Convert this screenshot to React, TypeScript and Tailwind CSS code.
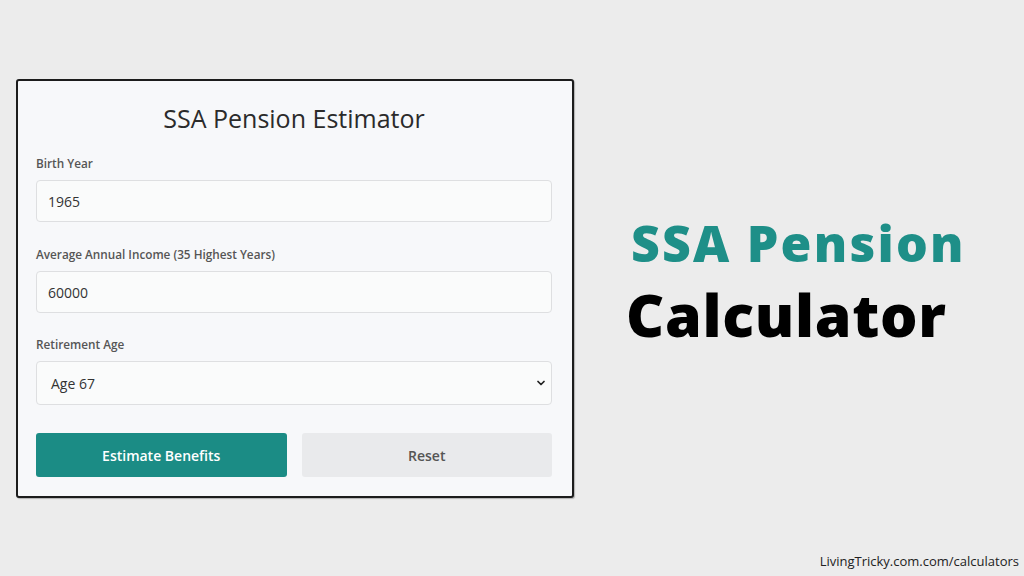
import { ChevronDown } from 'lucide-react'

function Field({ label, value, className }: { label: string; value: string; className?: string }) {
  return (
    <div className={className}>
      <label className="block text-[11.75px] leading-4 font-semibold text-[#555]">{label}</label>
      <div className="mt-[9px] h-[42px] flex items-center px-[11px] rounded-[4px] border border-[#dedfe1] bg-[#fafbfb] text-[14px] text-[#333]">
        {value}
      </div>
    </div>
  )
}

export default function App() {
  return (
    <div
      className="h-screen w-full bg-[#ececec] flex flex-col overflow-hidden"
      style={{ fontFamily: '"Open Sans", "Noto Sans", sans-serif' }}
    >
      <div className="flex items-start pt-[79px] pl-[16px]">
        <div className="w-[558px] border-2 border-[#1c1c1c] rounded-[3px] bg-[#f7f8fa] pt-[21px] pb-[19px] pl-[18px] pr-[20px] shadow-[1px_1px_1px_rgba(0,0,0,0.25)]">
          <h1 className="text-center text-[25px] leading-8 font-medium text-[#2b2b2b]">SSA Pension Estimator</h1>

          <Field className="mt-[21px]" label="Birth Year" value="1965" />
          <Field className="mt-[24px]" label="Average Annual Income (35 Highest Years)" value="60000" />

          <div className="mt-[23px]">
            <label className="block text-[11.75px] leading-4 font-semibold text-[#555]">Retirement Age</label>
            <div className="mt-[9px] h-[44px] flex items-center justify-between pl-[14px] pr-[4px] rounded-[4px] border border-[#dedfe1] bg-[#fafbfb] text-[14px] text-[#333]">
              <span>Age 67</span>
              <ChevronDown size={12} strokeWidth={3.5} className="text-[#222]" />
            </div>
          </div>

          <div className="mt-[28px] grid grid-cols-2 gap-[15px]">
            <button className="h-[44px] rounded-[3px] bg-[#1b8c85] text-white text-[14px] font-semibold">
              Estimate Benefits
            </button>
            <button className="h-[44px] rounded-[3px] bg-[#e9eaec] text-[#555] text-[14px] font-semibold">
              Reset
            </button>
          </div>
        </div>

        <div className="ml-[52px] mt-[136px] flex flex-col">
          <div className="text-[50px] leading-[56px] font-extrabold text-[#1e8f88] pl-[5px] tracking-[2.2px]">SSA Pension</div>
          <div className="mt-[11px] text-[59px] leading-[64px] font-extrabold text-black tracking-[0.7px]">Calculator</div>
        </div>
      </div>

      <div className="mt-auto pb-[5px] pr-[5px] text-right text-[13px] text-[#222]">LivingTricky.com.com/calculators</div>
    </div>
  )
}
